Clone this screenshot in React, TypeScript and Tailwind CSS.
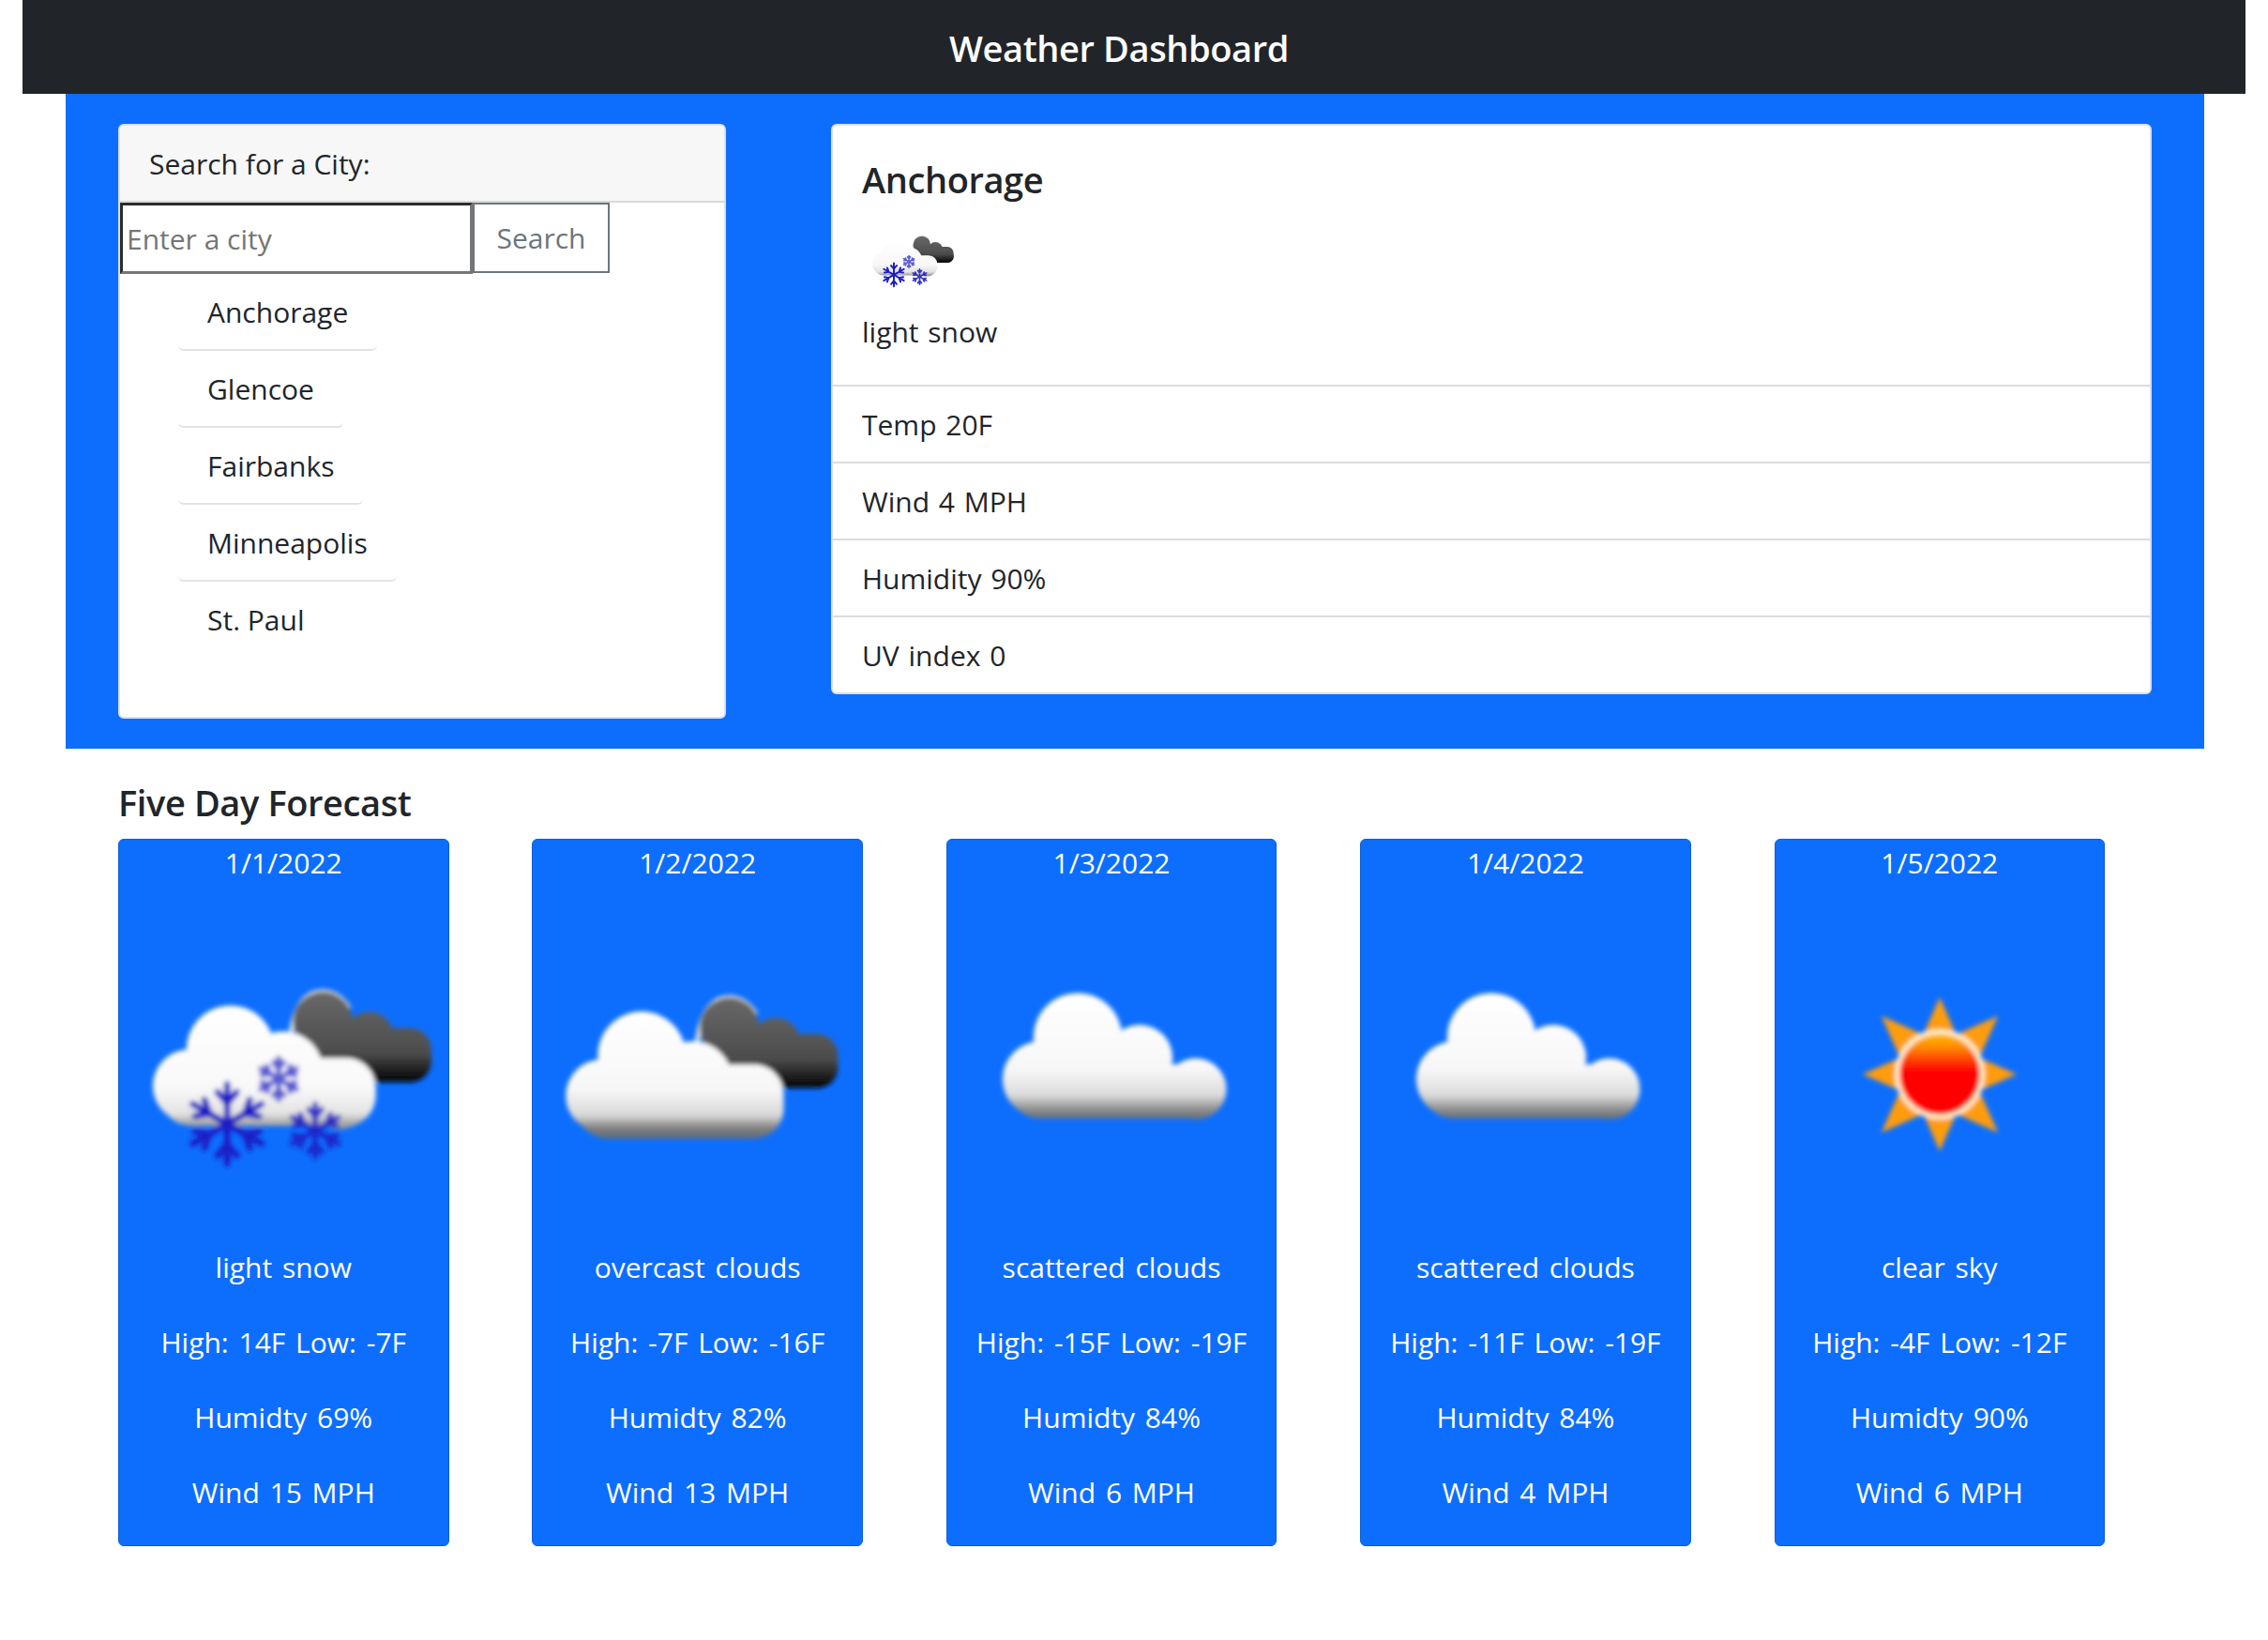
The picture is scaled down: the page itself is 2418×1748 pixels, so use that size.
import React from "react";

const FONT = "font-['Open_Sans','Noto_Sans',sans-serif]";

function CloudShape({ fill, parts, rect }: { fill: string; parts: number[][]; rect: number[] }) {
  return (
    <g fill={fill}>
      {parts.map((p, i) => (
        <circle key={i} cx={p[0]} cy={p[1]} r={p[2]} />
      ))}
      <rect x={rect[0]} y={rect[1]} width={rect[2]} height={rect[3]} rx={rect[4]} />
    </g>
  );
}

function Flake({ x, y, r, w, o = 1 }: { x: number; y: number; r: number; w: number; o?: number }) {
  const arms = [0, 60, 120, 180, 240, 300];
  return (
    <g transform={`translate(${x} ${y})`} stroke="#1d1dc4" strokeWidth={w} strokeLinecap="round" fill="none" opacity={o}>
      {arms.map((a) => (
        <g key={a} transform={`rotate(${a})`}>
          <path d={`M0 0V${-r}M${-r * 0.24} ${-r * 0.8}L0 ${-r * 0.52}L${r * 0.24} ${-r * 0.8}`} />
        </g>
      ))}
    </g>
  );
}

function Defs({ id }: { id: string }) {
  return (
    <defs>
      <filter id={`${id}b`} x="-10%" y="-10%" width="120%" height="120%">
        <feGaussianBlur stdDeviation="0.7" />
      </filter>
      <linearGradient id={`${id}s`} gradientUnits="userSpaceOnUse" x1="0" y1="25" x2="0" y2="64">
        <stop offset="0" stopColor="#ffffff" />
        <stop offset="0.6" stopColor="#f7f7f7" />
        <stop offset="0.8" stopColor="#dcdcdc" />
        <stop offset="0.92" stopColor="#8a8a8a" />
        <stop offset="1" stopColor="#5e6a78" />
      </linearGradient>
      <linearGradient id={`${id}w`} gradientUnits="userSpaceOnUse" x1="0" y1="30" x2="0" y2="69.5">
        <stop offset="0" stopColor="#ffffff" />
        <stop offset="0.62" stopColor="#f7f7f7" />
        <stop offset="0.82" stopColor="#d8d8d8" />
        <stop offset="0.92" stopColor="#808080" />
        <stop offset="1" stopColor="#5e6a78" />
      </linearGradient>
      <linearGradient id={`${id}n`} gradientUnits="userSpaceOnUse" x1="0" y1="29" x2="0" y2="65.6">
        <stop offset="0" stopColor="#ffffff" />
        <stop offset="0.7" stopColor="#f8f8f8" />
        <stop offset="0.9" stopColor="#e2e2e2" />
        <stop offset="1" stopColor="#9a9a9a" />
      </linearGradient>
      <linearGradient id={`${id}d`} gradientUnits="userSpaceOnUse" x1="0" y1="24" x2="0" y2="54">
        <stop offset="0" stopColor="#6a6a6a" />
        <stop offset="0.65" stopColor="#4c4c4c" />
        <stop offset="0.88" stopColor="#111111" />
        <stop offset="1" stopColor="#000000" />
      </linearGradient>
      <linearGradient id={`${id}r`} gradientUnits="userSpaceOnUse" x1="0" y1="37" x2="0" y2="64">
        <stop offset="0" stopColor="#ffc400" />
        <stop offset="0.18" stopColor="#ff8a00" />
        <stop offset="0.45" stopColor="#ff0000" />
        <stop offset="1" stopColor="#ff0000" />
      </linearGradient>
    </defs>
  );
}

function DarkCloud({ id, dy = 0, dx = 0 }: { id: string; dy?: number; dx?: number }) {
  return (
    <g transform={`translate(${dx} ${dy})`}>
      <path d="M52 41C52.5 31 56 25.2 61.5 25C65 24.8 68 27 70 30" fill="none" stroke="#e0e0e0" strokeWidth="1.4" />
      <CloudShape
        fill={`url(#${id}d)`}
        parts={[
          [62, 34, 9],
          [76, 38.5, 7.4],
          [88.5, 46, 6.4],
        ]}
        rect={[56, 36, 38.8, 16.4, 6.4]}
      />
    </g>
  );
}

function SnowIcon({ className }: { className: string }) {
  const id = React.useId().replace(/:/g, "");
  return (
    <svg viewBox="0 0 100 100" className={className}>
      <Defs id={id} />
      <g filter={`url(#${id}b)`}>
        <DarkCloud id={id} />
        <CloudShape
          fill={`url(#${id}n)`}
          parts={[
            [34, 42.5, 13.3],
            [21.5, 53.5, 11],
            [50, 49, 12],
            [67, 56, 10.6],
          ]}
          rect={[13, 45, 65, 20.6, 9]}
        />
        <Flake x={33} y={65} r={12} w={1.9} />
        <Flake x={59.7} y={67} r={8} w={1.6} o={0.9} />
        <Flake x={48.6} y={51.4} r={6.2} w={1.6} o={0.72} />
      </g>
    </svg>
  );
}

function OvercastIcon({ className }: { className: string }) {
  const id = React.useId().replace(/:/g, "");
  return (
    <svg viewBox="0 0 100 100" className={className}>
      <Defs id={id} />
      <g filter={`url(#${id}b)`}>
        <DarkCloud id={id} dy={1.8} dx={-2.4} />
        <CloudShape
          fill={`url(#${id}w)`}
          parts={[
            [33, 44.3, 13.3],
            [21, 56.5, 11],
            [48.5, 52, 12],
            [65, 59, 10.6],
          ]}
          rect={[13.5, 47, 62.5, 22.5, 9]}
        />
      </g>
    </svg>
  );
}

function ScatteredIcon({ className }: { className: string }) {
  const id = React.useId().replace(/:/g, "");
  return (
    <svg viewBox="0 0 100 100" className={className}>
      <Defs id={id} />
      <g filter={`url(#${id}b)`}>
        <CloudShape
          fill={`url(#${id}s)`}
          parts={[
            [39.8, 38.8, 13.4],
            [28.5, 51.5, 11.5],
            [58.5, 45, 10],
            [75.5, 54.5, 9.3],
          ]}
          rect={[20, 47, 64, 16.4, 8]}
        />
      </g>
    </svg>
  );
}

function SunIcon({ className }: { className: string }) {
  const id = React.useId().replace(/:/g, "");
  const pts: string[] = [];
  for (let i = 0; i < 16; i++) {
    const a = (i * Math.PI) / 8 - Math.PI / 2;
    const diag = i % 4 === 2;
    const r = i % 2 === 0 ? (diag ? 25 : 23.3) : 13;
    pts.push(`${(50 + r * Math.cos(a)).toFixed(2)},${(50 + r * Math.sin(a)).toFixed(2)}`);
  }
  return (
    <svg viewBox="0 0 100 100" className={className}>
      <Defs id={id} />
      <g filter={`url(#${id}b)`}>
        <polygon points={pts.join(" ")} fill="#ff9c0c" />
        <circle cx="50" cy="50" r="13.6" fill="#fff3d0" />
        <circle cx="50" cy="50" r="12.2" fill={`url(#${id}r)`} />
      </g>
    </svg>
  );
}

const days = [
  { date: "1/1/2022", Icon: SnowIcon, desc: "light snow", hl: "High: 14F Low: -7F", hum: "Humidty 69%", wind: "Wind 15 MPH" },
  { date: "1/2/2022", Icon: OvercastIcon, desc: "overcast clouds", hl: "High: -7F Low: -16F", hum: "Humidty 82%", wind: "Wind 13 MPH" },
  { date: "1/3/2022", Icon: ScatteredIcon, desc: "scattered clouds", hl: "High: -15F Low: -19F", hum: "Humidty 84%", wind: "Wind 6 MPH" },
  { date: "1/4/2022", Icon: ScatteredIcon, desc: "scattered clouds", hl: "High: -11F Low: -19F", hum: "Humidty 84%", wind: "Wind 4 MPH" },
  { date: "1/5/2022", Icon: SunIcon, desc: "clear sky", hl: "High: -4F Low: -12F", hum: "Humidty 90%", wind: "Wind 6 MPH" },
];

const cities = ["Anchorage", "Glencoe", "Fairbanks", "Minneapolis", "St. Paul"];
const stats = ["Temp 20F", "Wind 4 MPH", "Humidity 90%", "UV index 0"];

export default function App() {
  return (
    <div className={`${FONT} w-[2418px] h-[1748px] bg-white text-[#212529] text-[30px] leading-[37px] overflow-hidden`}>
      <header className="mx-[24px] w-[2370px] h-[100px] bg-[#212529] flex items-center justify-center pr-[32px] pt-[2px]">
        <h1 className="text-white text-[38px] font-semibold leading-[50px] tracking-[-0.4px]">Weather Dashboard</h1>
      </header>

      <section className="mx-[70px] w-[2280px] h-[698px] bg-[#0d6efd] px-[56px] pt-[32px] flex gap-[112px] items-start">
        <div className="w-[648px] h-[634px] bg-white rounded-[6px] border-2 border-[#dcdfe3] flex flex-col overflow-hidden shrink-0">
          <div className="h-[82px] bg-[#f7f7f7] border-b-2 border-[#d9d9d9] pl-[31px] flex items-center">Search for a City:</div>
          <div className="flex h-[76px]">
            <input
              placeholder="Enter a city"
              className="w-[376px] h-[76px] border-[3px] border-t-[#2b2b2b] border-l-[#2b2b2b] border-b-[#767676] border-r-[#767676] px-[4px] outline-none placeholder:text-[#757575]"
            />
            <button className="w-[146px] h-[75px] border-2 border-[#6c757d] text-[#6c757d] bg-white">Search</button>
          </div>
          <ul className="pl-[62px] flex flex-col items-start">
            {cities.map((c, i) => (
              <li
                key={c}
                className={`h-[82px] px-[31px] flex items-center border-b-2 rounded-b-[6px] ${i < 4 ? "border-[#e2e3e5]" : "border-transparent"}`}
              >
                {c}
              </li>
            ))}
          </ul>
        </div>

        <div className="w-[1408px] h-[608px] bg-white rounded-[6px] border-2 border-[#dcdfe3] overflow-hidden [word-spacing:2px]">
          <div className="h-[278px] pl-[31px] pt-[32px] border-b-2 border-[#dcdcdc] flex flex-col items-start">
            <h2 className="text-[38px] font-semibold leading-[50px] tracking-[-0.4px]">Anchorage</h2>
            <SnowIcon className="w-[103px] h-[103px] mt-[10px]" />
            <p className="mt-[6px]">light snow</p>
          </div>
          {stats.map((s, i) => (
            <div key={s} className={`h-[82px] pl-[31px] flex items-center border-b-2 ${i < 3 ? "border-[#dcdcdc]" : "border-transparent"}`}>
              {s}
            </div>
          ))}
        </div>
      </section>

      <section className="pl-[126px] pt-[35px]">
        <h2 className="text-[38px] font-semibold leading-[44px] tracking-[-0.4px] mb-[17px]">Five Day Forecast</h2>
        <div className="flex gap-[88.9px]">
          {days.map((d) => (
            <div key={d.date} className="w-[352.5px] h-[754px] bg-[#0d6efd] border border-[#0b5ed7] rounded-[6px] text-white text-center flex flex-col items-center [word-spacing:3px]">
              <div className="leading-[37px] mt-[6px]">{d.date}</div>
              <d.Icon className="w-[352px] h-[352px] mt-[31px]" />
              <div className="flex flex-col mt-[11px] gap-[43px] whitespace-nowrap">
                <p>{d.desc}</p>
                <p>{d.hl}</p>
                <p>{d.hum}</p>
                <p>{d.wind}</p>
              </div>
            </div>
          ))}
        </div>
      </section>
    </div>
  );
}
